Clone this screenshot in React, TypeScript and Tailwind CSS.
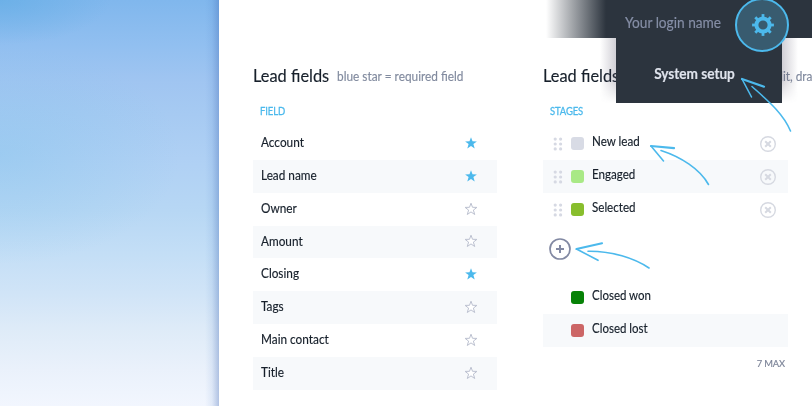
import React from "react";

const fields: { name: string; required: boolean }[] = [
  { name: "Account", required: true },
  { name: "Lead name", required: true },
  { name: "Owner", required: false },
  { name: "Amount", required: false },
  { name: "Closing", required: true },
  { name: "Tags", required: false },
  { name: "Main contact", required: false },
  { name: "Title", required: false },
];

const stages = [
  { name: "New lead", color: "bg-[#d8dbe5]" },
  { name: "Engaged", color: "bg-[#a9e986]" },
  { name: "Selected", color: "bg-[#88be2d]" },
];

const closedStages = [
  { name: "Closed won", color: "bg-[#078207]" },
  { name: "Closed lost", color: "bg-[#cc6666]" },
];

function Star({ filled }: { filled: boolean }) {
  return (
    <svg
      viewBox="0 0 12 12"
      className={filled ? "mb-px size-3 overflow-visible fill-[#4cb9ec]" : "mb-px size-3 overflow-visible fill-white stroke-[#bcc1d0]"}
      strokeWidth={filled ? 0 : 1}
    >
      <path d="M6 .2 7.500 4.300 11.900 4.400 8.400 7.100 9.700 11.500 6 8.900 2.300 11.500 3.600 7.100 .1 4.400 4.500 4.300Z" />
    </svg>
  );
}

function Grip() {
  return (
    <svg viewBox="0 0 10 14" className="h-3.5 w-2.5 fill-[#d6d9e3]">
      {[2.1, 7, 11.9].map((y) => (
        <g key={y}>
          <circle cx="2.2" cy={y} r="1.6" />
          <circle cx="7.6" cy={y} r="1.6" />
        </g>
      ))}
    </svg>
  );
}

function RemoveIcon() {
  return (
    <svg viewBox="0 0 16 16" className="size-4 overflow-visible fill-none stroke-[#d6d9e1]">
      <circle cx="8" cy="8" r="7.3" strokeWidth="1.4" />
      <path d="M5.2 5.2 10.8 10.8M10.8 5.2 5.2 10.8" strokeWidth="2" />
    </svg>
  );
}

function Gear() {
  return (
    <svg viewBox="-11 -11 22 22" className="ml-px size-[22px] fill-none stroke-[#4cb9ec]">
      <circle r="6.600" strokeWidth="4" />
      {[0, 45, 90, 135, 180, 225, 270, 315].map((a) => (
        <path key={a} d="M0-7.500V-10.900" strokeWidth="2.800" transform={`rotate(${a})`} />
      ))}
    </svg>
  );
}

function Heading({ title, note, noteClass }: { title: string; note: string; noteClass: string }) {
  return (
    <div className="flex h-5 items-center whitespace-nowrap">
      <h2 className="w-[84px] shrink-0 scale-y-[1.060] text-[16.400px] leading-5 text-[#17202b]">{title}</h2>
      <span className={noteClass}>{note}</span>
    </div>
  );
}

export default function App() {
  return (
    <div className="relative flex h-[408px] w-[812px] overflow-hidden bg-white font-['Lato','Open_Sans',sans-serif] text-[11.800px] text-[#17202b] [-webkit-text-stroke:0.15px]">
      <aside className="flex h-[406px] w-[219px] shrink-0 justify-end bg-[radial-gradient(110px_45px_at_0%_0%,rgba(95,172,228,0.6),transparent),radial-gradient(180px_110px_at_0%_38%,rgba(125,195,235,0.36),transparent),linear-gradient(180deg,#80b7ed_0%,#91bff0_11%,#a0c5f1_20%,#a6caf2_28%,#afd0f4_39%,#b7d7f4_52%,#c3def6_62%,#d0e4f7_72%,#deebf8_81%,#eaf1fb_91%,#f2f6fe_100%)]">
        <div className="h-full w-3.5 bg-[linear-gradient(90deg,transparent,rgba(70,120,195,0.1)_50%,rgba(65,105,180,0.36))]" />
      </aside>

      <main className="flex gap-[46px] pt-[66px] pl-[34px]">
        <section className="w-[244px] shrink-0">
          <Heading
            title="Lead fields"
            note="blue star = required field"
            noteClass="mt-[2px] scale-y-110 text-[11.850px] leading-4 text-[#828b9f]"
          />
          <div className="flex h-[41px] items-center pt-[12px] pl-[7px] text-[#4cb9ec] [-webkit-text-stroke:0.25px]">
            <span className="scale-y-110 text-[9.500px] tracking-[-0.1px]">FIELD</span>
          </div>
          <ul>
            {fields.map((f) => (
              <li key={f.name} className="flex h-[32.85px] items-center justify-between pr-[20.500px] pl-2 even:bg-[#f7f9fb]">
                <span className="mb-px scale-y-110">{f.name}</span>
                <Star filled={f.required} />
              </li>
            ))}
          </ul>
        </section>

        <section className="w-[245px] shrink-0">
          <Heading
            title="Lead fields"
            note="edit, dra"
            noteClass="ml-[143px] mt-[2px] scale-y-110 text-[11.850px] leading-4 text-[#828b9f]"
          />
          <div className="flex h-[41px] items-center pt-[12px] pl-[7px] text-[#4cb9ec] [-webkit-text-stroke:0.25px]">
            <span className="scale-y-110 text-[9.500px] tracking-[-0.15px]">STAGES</span>
          </div>
          <ul>
            {stages.map((s) => (
              <li key={s.name} className="flex h-[33px] items-center pr-[12px] pl-[10px] even:bg-[#f7f9fb]">
                <Grip />
                <span className={`ml-2 size-[13px] rounded-[3px] ${s.color}`} />
                <span className="mb-[3px] ml-2 grow scale-y-110 text-[11.600px]">{s.name}</span>
                <RemoveIcon />
              </li>
            ))}
          </ul>
          <div className="flex h-[55px] items-center pb-[9px] pl-[6px]">
            <svg viewBox="0 0 22 22" className="size-[22px] fill-none stroke-[#8289a3]">
              <circle cx="11" cy="11" r="10" strokeWidth="1.7" />
              <path d="M11 7V15M7 11H15" strokeWidth="2" />
            </svg>
          </div>
          <ul>
            {closedStages.map((s) => (
              <li key={s.name} className="flex h-[33px] items-center pl-[28px] even:bg-[#f7f9fb]">
                <span className={`size-[13px] rounded-[3px] ${s.color}`} />
                <span className="mb-[3px] ml-2 scale-y-110 text-[11.500px]">{s.name}</span>
              </li>
            ))}
          </ul>
          <div className="flex justify-end pt-[9px] pr-[3px] text-[9.400px] leading-4 tracking-[-0.15px] text-[#7b8397]">
            <span className="scale-y-110">7 MAX</span>
          </div>
        </section>
      </main>

      <header className="absolute top-0 right-0 flex h-[38px] w-[266px] items-center bg-[linear-gradient(90deg,transparent,#2c343e_60px)]">
        <span className="mt-[9px] ml-[79px] scale-y-[1.080] text-[13.700px] whitespace-nowrap text-[#858ea6]">Your login name</span>
      </header>
      <div className="absolute top-[38px] left-[600px] flex h-[65px] w-[198px]">
        <div className="w-4 bg-[linear-gradient(270deg,rgba(70,65,90,0.25),transparent)] [mask-image:linear-gradient(#000_65%,transparent)]" />
        <div className="flex w-[166px] items-center justify-center bg-[#2c343e] pt-[8px] pr-[9px] text-[13.600px] font-bold whitespace-nowrap text-[#dfe3ec]">
          <span className="scale-y-110">System setup</span>
        </div>
        <div className="w-4 bg-[linear-gradient(90deg,rgba(70,65,90,0.25),transparent)] [mask-image:linear-gradient(#000_65%,transparent)]" />
      </div>
      <div className="absolute top-[-2px] left-[735px] flex size-[54px] items-center justify-center rounded-full border-2 border-[#4cb9ec] bg-[#385b6f]">
        <Gear />
      </div>

      <svg
        viewBox="0 0 812 408"
        className="pointer-events-none absolute inset-0 h-full w-full fill-none stroke-[#4cb9ec]"
        strokeLinecap="round"
        strokeLinejoin="round"
        strokeWidth="1.600"
      >
        <path d="M752 86.500C767 100 783 113 790.500 131M742 79 751.500 97" />
        <path d="M742 79 764 86.700" strokeWidth="2.200" />
        <path d="M661 150.500C681 157 700 169 708.500 184.500M651 146 663.500 161" />
        <path d="M651 146 674 148.200" strokeWidth="2.200" />
        <path d="M588 251.300C612 251 634 258 649 268M576.500 249 598 260.300" />
        <path d="M576.500 249 602 243.300" strokeWidth="2.200" />
      </svg>
    </div>
  );
}
